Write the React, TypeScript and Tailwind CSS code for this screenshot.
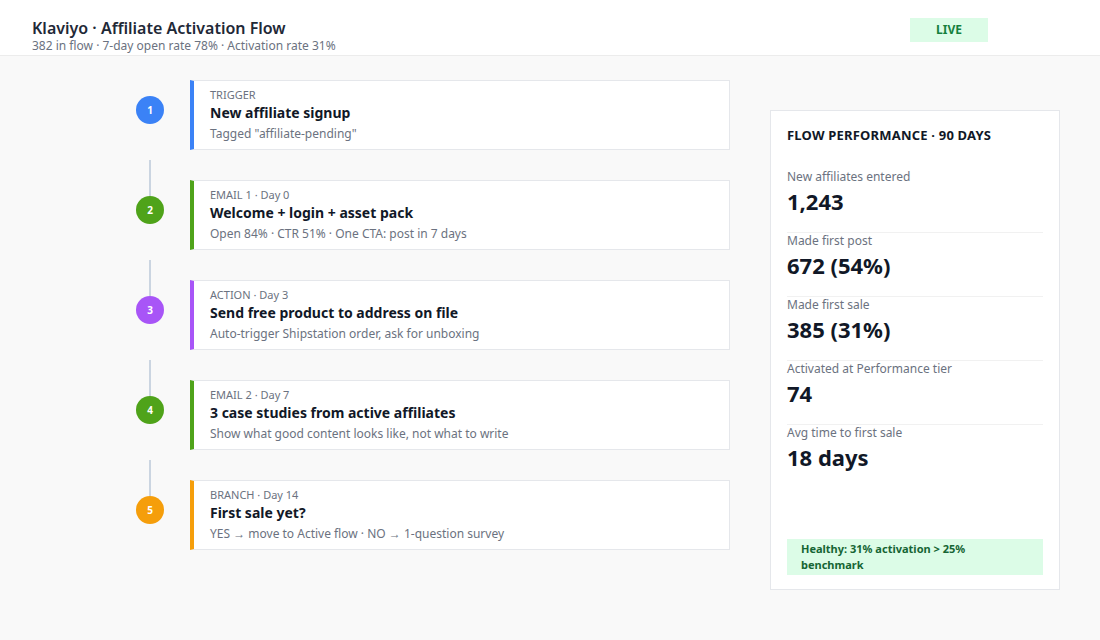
import React from 'react';

const steps = [
  { n: 1, color: 'bg-[#3b82f6]', border: 'border-l-[#3b82f6]', tag: 'TRIGGER', title: 'New affiliate signup', desc: 'Tagged "affiliate-pending"' },
  { n: 2, color: 'bg-[#4fa31a]', border: 'border-l-[#4fa31a]', tag: 'EMAIL 1 · Day 0', title: 'Welcome + login + asset pack', desc: 'Open 84% · CTR 51% · One CTA: post in 7 days' },
  { n: 3, color: 'bg-[#a855f7]', border: 'border-l-[#a855f7]', tag: 'ACTION · Day 3', title: 'Send free product to address on file', desc: 'Auto-trigger Shipstation order, ask for unboxing' },
  { n: 4, color: 'bg-[#4fa31a]', border: 'border-l-[#4fa31a]', tag: 'EMAIL 2 · Day 7', title: '3 case studies from active affiliates', desc: 'Show what good content looks like, not what to write' },
  { n: 5, color: 'bg-[#f59e0b]', border: 'border-l-[#f59e0b]', tag: 'BRANCH · Day 14', title: 'First sale yet?', desc: 'YES → move to Active flow · NO → 1-question survey' },
];

const stats = [
  ['New affiliates entered', '1,243'],
  ['Made first post', '672 (54%)'],
  ['Made first sale', '385 (31%)'],
  ['Activated at Performance tier', '74'],
  ['Avg time to first sale', '18 days'],
];

export default function App() {
  return (
    <div className="w-[1100px] h-[640px] bg-[#f9f9f9] font-['Liberation_Sans',Arial,sans-serif] text-[#111827] overflow-hidden">
      <header className="h-[56px] bg-white border-b border-[#ececec] flex items-start justify-between pl-8 pr-[112px] pt-[18px]">
        <div>
          <div className="text-[16px] leading-[20px] font-semibold font-['Open_Sans',sans-serif] text-[#1f2937]">Klaviyo · Affiliate Activation Flow</div>
          <div className="text-[12px] leading-[15px] text-[#6b7280]">382 in flow · 7-day open rate 78% · Activation rate 31%</div>
        </div>
        <div className="w-[78px] h-[24px] bg-[#dcfce7] text-[#15803d] text-[12px] font-bold flex items-center justify-center">LIVE</div>
      </header>
      <main className="flex pl-[136px] pt-[24px]">
        <div className="flex flex-col gap-[30px]">
          {steps.map((s, i) => (
            <div key={s.n} className="flex h-[70px] gap-[26px]">
              <div className="relative w-[28px] pt-[16px]">
                {i > 0 && <div className="absolute left-[13px] top-[-20px] w-[2px] h-[36px] bg-[#cbd5e1]" />}
                <div className={`w-[28px] h-[28px] rounded-full ${s.color} text-white text-[10px] font-bold flex items-center justify-center`}>{s.n}</div>
              </div>
              <div className={`w-[540px] bg-white border border-[#e5e7eb] border-l-4 ${s.border} pl-4 pt-[7px]`}>
                <div className="text-[11px] leading-[14px] text-[#6b7280]">{s.tag}</div>
                <div className="text-[14px] leading-[20px] font-bold text-[#111827] mt-[1px]">{s.title}</div>
                <div className="text-[12px] leading-[16px] text-[#6b7280] mt-[3px]">{s.desc}</div>
              </div>
            </div>
          ))}
        </div>
        <div className="ml-[40px] mt-[30px] w-[290px] h-[480px] bg-white border border-[#e5e7eb] px-4 pt-[15px] pb-[14px] flex flex-col">
          <div className="text-[13px] font-bold tracking-[0.2px] text-[#111827] mb-[23px]">FLOW PERFORMANCE · 90 DAYS</div>
          <div className="flex flex-col">
            {stats.map(([l, v], i) => (
              <div key={l} className={`h-[64px] ${i < stats.length - 1 ? 'border-b border-[#f1f1f1]' : ''}`}>
                <div className="text-[12px] leading-[16px] text-[#6b7280]">{l}</div>
                <div className="text-[22px] leading-[28px] font-bold text-[#111827] mt-[2px]">{v}</div>
              </div>
            ))}
          </div>
          <div className="mt-auto h-[36px] bg-[#dcfce7] text-[#166534] text-[11px] font-bold flex items-center px-[14px]">Healthy: 31% activation &gt; 25% benchmark</div>
        </div>
      </main>
    </div>
  );
}
